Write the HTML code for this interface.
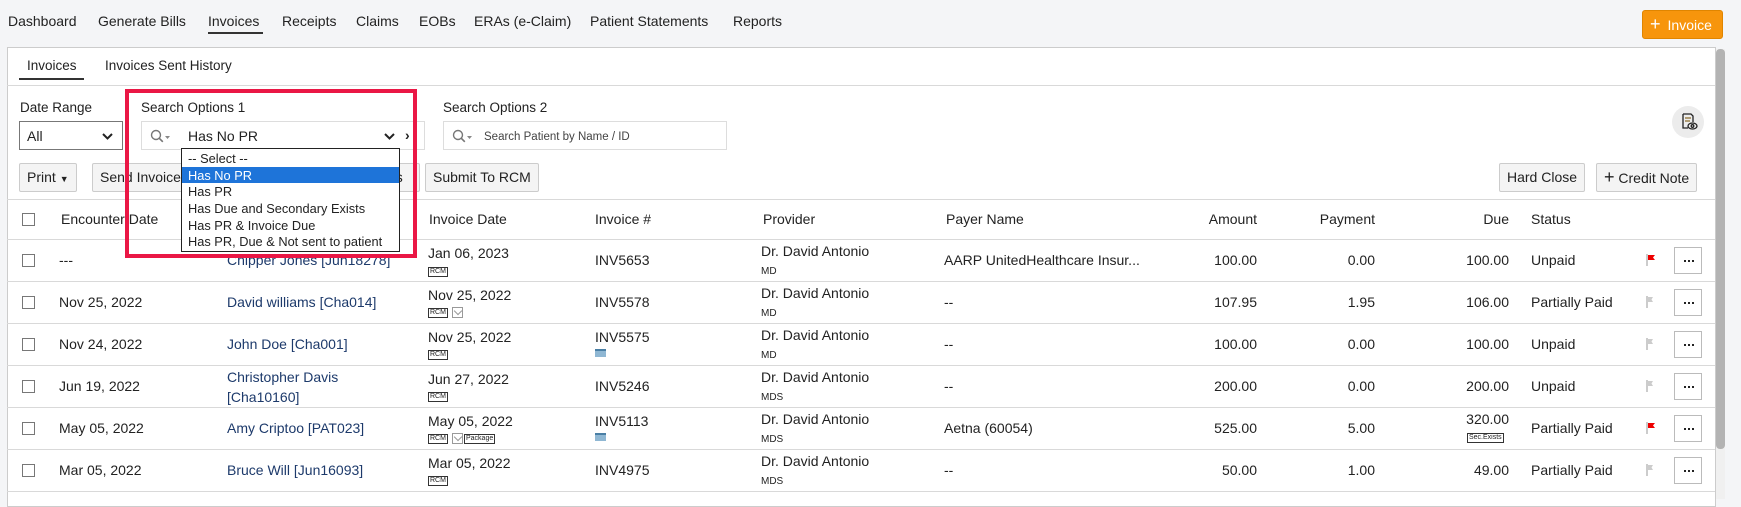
<!DOCTYPE html>
<html><head><meta charset="utf-8"><style>
*{box-sizing:border-box;margin:0;padding:0}
body{width:1741px;height:499px;overflow:hidden;background:#f4f5f7;font-family:"Liberation Sans",sans-serif;color:#222;position:relative}
.a{position:absolute;white-space:nowrap;font-size:14px;line-height:16px}
.r{position:absolute;white-space:nowrap;font-size:14px;line-height:16px;text-align:right}
.hl{position:absolute;height:1px;background:#d9d9d9;left:7px;width:1708px}
.box{position:absolute;border:1px solid #bbb;background:#fff}
.btn{position:absolute;border:1px solid #ccc;background:#f4f4f4;border-radius:2px;font-size:14px;line-height:27px;padding:0 7px;white-space:nowrap}
.cb{position:absolute;width:13px;height:13px;border:1px solid #777;background:#fff}
.badge{position:absolute;border:1px solid #333;font-size:7px;line-height:8px;padding:0 1px;height:10px}
.link{color:#1d3a6b}
.sm{font-size:10px}
.dots{position:absolute;width:28px;height:27px;border:1px solid #bbb;background:#fff}
.dots:after{content:"";position:absolute;left:9px;top:12px;width:2px;height:2px;background:#222;box-shadow:4px 0 #222,8px 0 #222}
.dd div{height:16.7px;font-size:12.8px;line-height:17px;padding-left:6px}
.mail{position:absolute;width:11px;height:11px;border:1px solid #999}
.mail:after{content:"";position:absolute;left:2px;top:0;width:5px;height:5px;border-right:1px solid #999;border-bottom:1px solid #999;transform:rotate(45deg)}
</style></head><body>
<div class="a" style="left:8px;top:13px">Dashboard</div>
<div class="a" style="left:98px;top:13px">Generate Bills</div>
<div class="a" style="left:208px;top:13px">Invoices</div>
<div style="position:absolute;left:208px;top:32px;width:55px;height:2px;background:#333"></div>
<div class="a" style="left:282px;top:13px">Receipts</div>
<div class="a" style="left:356px;top:13px">Claims</div>
<div class="a" style="left:419px;top:13px">EOBs</div>
<div class="a" style="left:474px;top:13px">ERAs (e-Claim)</div>
<div class="a" style="left:590px;top:13px">Patient Statements</div>
<div class="a" style="left:733px;top:13px">Reports</div>
<div style="position:absolute;left:1642px;top:10px;width:81px;height:29px;background:#f7950c;border:1px solid #e08500;border-radius:3px;color:#fff;font-size:14px;line-height:27px;padding-left:7px"><span style="font-size:18px;margin-right:7px">+</span>Invoice</div>
<div style="position:absolute;left:7px;top:47px;width:1709px;height:460px;background:#fff;border:1px solid #ccc"></div>
<div style="position:absolute;left:1716px;top:49px;width:9px;height:450px;background:#f0f0f0"></div>
<div style="position:absolute;left:1716px;top:49px;width:9px;height:400px;background:#b3b3b3;border-radius:4px"></div>
<div class="a" style="left:27px;top:58px;font-size:13.5px">Invoices</div>
<div style="position:absolute;left:19px;top:78px;width:65px;height:2px;background:#333"></div>
<div class="a" style="left:105px;top:58px;font-size:13.5px">Invoices Sent History</div>
<div class="hl" style="top:85px"></div>
<div class="a" style="left:20px;top:100px;font-size:13.5px">Date Range</div>
<div class="a" style="left:141px;top:100px;font-size:13.5px">Search Options 1</div>
<div class="a" style="left:443px;top:100px;font-size:13.5px">Search Options 2</div>
<svg width="0" height="0" style="position:absolute"><defs><g id="mg"><circle cx="6" cy="6" r="4.5" fill="none" stroke="#777" stroke-width="1.4"/><path d="M9.3 9.3l3.5 3.5" stroke="#777" stroke-width="1.6"/><path d="M15 7h5l-2.5 3z" fill="#888"/></g><g id="chev"><path d="M1 1l4.5 4.5L10 1" fill="none" stroke="#222" stroke-width="2"/></g></defs></svg>
<div class="box" style="left:19px;top:121px;width:104px;height:29px;border-color:#777"><span class="a" style="left:7px;top:6px">All</span><svg style="position:absolute;left:82px;top:11px" width="11" height="8"><use href="#chev"/></svg></div>
<div class="box" style="left:141px;top:121px;width:284px;height:29px;border-color:#ddd"><svg style="position:absolute;left:8px;top:7px" width="22" height="15"><use href="#mg"/></svg><span class="a" style="left:46px;top:6px">Has No PR</span><svg style="position:absolute;left:242px;top:11px" width="11" height="8"><use href="#chev"/></svg><span class="a" style="left:263px;top:5px;font-weight:bold">&#x203A;</span></div>
<div class="box" style="left:443px;top:121px;width:284px;height:29px;border-color:#ddd"><svg style="position:absolute;left:8px;top:7px" width="22" height="15"><use href="#mg"/></svg><span class="a" style="left:40px;top:7px;font-size:11.5px;color:#444">Search Patient by Name / ID</span></div>
<div style="position:absolute;left:1672px;top:106px;width:32px;height:32px;border-radius:50%;background:#ececec"></div>
<svg style="position:absolute;left:1680px;top:113px" width="18" height="18" viewBox="0 0 18 18" fill="none" stroke="#222" stroke-width="1.3"><path d="M3 1h8l2 2v6M3 1v14h5"/><path d="M5 5h6M5 8h5" stroke="#8a6d2c"/><ellipse cx="12.5" cy="13" rx="4.5" ry="3"/><circle cx="12.5" cy="13" r="1.3"/></svg>
<div class="btn" style="left:19px;top:163px;height:29px">Print <span style="font-size:9px">&#9660;</span></div>
<div class="btn" style="left:92px;top:163px;height:29px;width:100px">Send Invoice</div>
<div class="btn" style="left:380px;top:163px;height:29px;width:40px">ns</div>
<div class="btn" style="left:425px;top:163px;height:29px">Submit To RCM</div>
<div class="btn" style="left:1499px;top:163px;height:29px">Hard Close</div>
<div class="btn" style="left:1596px;top:163px;height:29px"><span style="font-size:18px">+</span> Credit Note</div>
<div class="hl" style="top:199px"></div>
<div class="cb" style="left:22px;top:213px"></div>
<div class="a" style="left:61px;top:211px">Encounter Date</div>
<div class="a" style="left:429px;top:211px">Invoice Date</div>
<div class="a" style="left:595px;top:211px">Invoice #</div>
<div class="a" style="left:763px;top:211px">Provider</div>
<div class="a" style="left:946px;top:211px">Payer Name</div>
<div class="r" style="right:484px;top:211px">Amount</div>
<div class="r" style="right:366px;top:211px">Payment</div>
<div class="r" style="right:232px;top:211px">Due</div>
<div class="a" style="left:1531px;top:211px">Status</div>
<div class="hl" style="top:239px"></div>
<div class="hl" style="top:281px"></div>
<div class="hl" style="top:323px"></div>
<div class="hl" style="top:365px"></div>
<div class="hl" style="top:407px"></div>
<div class="hl" style="top:449px"></div>
<div class="hl" style="top:491px"></div>

<div class="cb" style="left:22px;top:254px"></div>
<div class="a" style="left:59px;top:252px">---</div>
<div class="a link" style="left:227px;top:252px">Chipper Jones [Jun18278]</div>
<div class="a" style="left:428px;top:245px">Jan 06, 2023</div><div class="badge" style="left:428px;top:267px">RCM</div>
<div class="a" style="left:595px;top:252px">INV5653</div>
<div class="a" style="left:761px;top:243px">Dr. David Antonio</div><div class="a sm" style="left:761px;top:264px">MD</div>
<div class="a" style="left:944px;top:252px">AARP UnitedHealthcare Insur...</div>
<div class="r" style="right:484px;top:252px">100.00</div><div class="r" style="right:366px;top:252px">0.00</div><div class="r" style="right:232px;top:252px">100.00</div>
<div class="a" style="left:1531px;top:252px">Unpaid</div>

<div class="cb" style="left:22px;top:296px"></div>
<div class="a" style="left:59px;top:294px">Nov 25, 2022</div>
<div class="a link" style="left:227px;top:294px">David williams [Cha014]</div>
<div class="a" style="left:428px;top:287px">Nov 25, 2022</div><div class="badge" style="left:428px;top:308px">RCM</div><div class="mail" style="left:452px;top:307px"></div>
<div class="a" style="left:595px;top:294px">INV5578</div>
<div class="a" style="left:761px;top:285px">Dr. David Antonio</div><div class="a sm" style="left:761px;top:306px">MD</div>
<div class="a" style="left:944px;top:294px">--</div>
<div class="r" style="right:484px;top:294px">107.95</div><div class="r" style="right:366px;top:294px">1.95</div><div class="r" style="right:232px;top:294px">106.00</div>
<div class="a" style="left:1531px;top:294px">Partially Paid</div>

<div class="cb" style="left:22px;top:338px"></div>
<div class="a" style="left:59px;top:336px">Nov 24, 2022</div>
<div class="a link" style="left:227px;top:336px">John Doe [Cha001]</div>
<div class="a" style="left:428px;top:329px">Nov 25, 2022</div><div class="badge" style="left:428px;top:350px">RCM</div>
<div class="a" style="left:595px;top:329px">INV5575</div><div style="position:absolute;left:595px;top:349px;width:11px;height:8px;background:#8fb7d3;border-top:2px solid #4a7fa5"></div>
<div class="a" style="left:761px;top:327px">Dr. David Antonio</div><div class="a sm" style="left:761px;top:348px">MD</div>
<div class="a" style="left:944px;top:336px">--</div>
<div class="r" style="right:484px;top:336px">100.00</div><div class="r" style="right:366px;top:336px">0.00</div><div class="r" style="right:232px;top:336px">100.00</div>
<div class="a" style="left:1531px;top:336px">Unpaid</div>

<div class="cb" style="left:22px;top:380px"></div>
<div class="a" style="left:59px;top:378px">Jun 19, 2022</div>
<div class="a link" style="left:227px;top:369px">Christopher Davis</div><div class="a link" style="left:227px;top:389px">[Cha10160]</div>
<div class="a" style="left:428px;top:371px">Jun 27, 2022</div><div class="badge" style="left:428px;top:392px">RCM</div>
<div class="a" style="left:595px;top:378px">INV5246</div>
<div class="a" style="left:761px;top:369px">Dr. David Antonio</div><div class="a sm" style="left:761px;top:390px">MDS</div>
<div class="a" style="left:944px;top:378px">--</div>
<div class="r" style="right:484px;top:378px">200.00</div><div class="r" style="right:366px;top:378px">0.00</div><div class="r" style="right:232px;top:378px">200.00</div>
<div class="a" style="left:1531px;top:378px">Unpaid</div>

<div class="cb" style="left:22px;top:422px"></div>
<div class="a" style="left:59px;top:420px">May 05, 2022</div>
<div class="a link" style="left:227px;top:420px">Amy Criptoo [PAT023]</div>
<div class="a" style="left:428px;top:413px">May 05, 2022</div><div class="badge" style="left:428px;top:434px">RCM</div><div class="mail" style="left:452px;top:433px"></div><div class="badge" style="left:464px;top:434px">Package</div>
<div class="a" style="left:595px;top:413px">INV5113</div><div style="position:absolute;left:595px;top:433px;width:11px;height:8px;background:#8fb7d3;border-top:2px solid #4a7fa5"></div>
<div class="a" style="left:761px;top:411px">Dr. David Antonio</div><div class="a sm" style="left:761px;top:432px">MDS</div>
<div class="a" style="left:944px;top:420px">Aetna (60054)</div>
<div class="r" style="right:484px;top:420px">525.00</div><div class="r" style="right:366px;top:420px">5.00</div><div class="r" style="right:232px;top:411px">320.00</div><div class="badge" style="left:1467px;top:433px">Sec.Exists</div>
<div class="a" style="left:1531px;top:420px">Partially Paid</div>

<div class="cb" style="left:22px;top:464px"></div>
<div class="a" style="left:59px;top:462px">Mar 05, 2022</div>
<div class="a link" style="left:227px;top:462px">Bruce Will [Jun16093]</div>
<div class="a" style="left:428px;top:455px">Mar 05, 2022</div><div class="badge" style="left:428px;top:476px">RCM</div>
<div class="a" style="left:595px;top:462px">INV4975</div>
<div class="a" style="left:761px;top:453px">Dr. David Antonio</div><div class="a sm" style="left:761px;top:474px">MDS</div>
<div class="a" style="left:944px;top:462px">--</div>
<div class="r" style="right:484px;top:462px">50.00</div><div class="r" style="right:366px;top:462px">1.00</div><div class="r" style="right:232px;top:462px">49.00</div>
<div class="a" style="left:1531px;top:462px">Partially Paid</div>

<svg style="position:absolute;left:1646px;top:254px" width="10" height="12"><path d="M1 0v12" stroke="#999"/><path d="M2 1h7l-2 2.5 2 2.5H2z" fill="#e00"/></svg>
<svg style="position:absolute;left:1646px;top:296px" width="10" height="12"><path d="M1 0v12" stroke="#999"/><path d="M2 1h5l-1.5 2.5L7 6H2z" fill="#ccc"/></svg>
<svg style="position:absolute;left:1646px;top:338px" width="10" height="12"><path d="M1 0v12" stroke="#999"/><path d="M2 1h5l-1.5 2.5L7 6H2z" fill="#ccc"/></svg>
<svg style="position:absolute;left:1646px;top:380px" width="10" height="12"><path d="M1 0v12" stroke="#999"/><path d="M2 1h5l-1.5 2.5L7 6H2z" fill="#ccc"/></svg>
<svg style="position:absolute;left:1646px;top:422px" width="10" height="12"><path d="M1 0v12" stroke="#999"/><path d="M2 1h7l-2 2.5 2 2.5H2z" fill="#e00"/></svg>
<svg style="position:absolute;left:1646px;top:464px" width="10" height="12"><path d="M1 0v12" stroke="#999"/><path d="M2 1h5l-1.5 2.5L7 6H2z" fill="#ccc"/></svg>
<div class="dots" style="left:1674px;top:247px"></div>
<div class="dots" style="left:1674px;top:289px"></div>
<div class="dots" style="left:1674px;top:331px"></div>
<div class="dots" style="left:1674px;top:373px"></div>
<div class="dots" style="left:1674px;top:415px"></div>
<div class="dots" style="left:1674px;top:457px"></div>

<div class="dd" style="position:absolute;left:181px;top:148px;width:219px;height:104px;background:#fff;border:1px solid #222;padding-top:1px">
<div>-- Select --</div>
<div style="background:#1e74d9;color:#fff">Has No PR</div>
<div>Has PR</div>
<div>Has Due and Secondary Exists</div>
<div>Has PR &amp; Invoice Due</div>
<div>Has PR, Due &amp; Not sent to patient</div>
</div>
<div style="position:absolute;left:125px;top:89px;width:292px;height:169px;border:4px solid #ea1745"></div>
</body></html>
